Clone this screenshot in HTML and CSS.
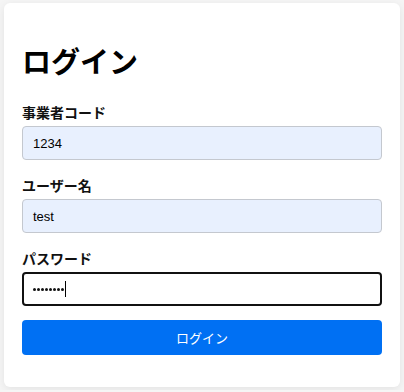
FILE: index.html
```html
<!DOCTYPE html>
<html lang="ja">
<head>
<meta charset="utf-8">
<link rel="stylesheet" href="styles.css">
</head>
<body>
<div class="card">
  <h1 class="title">ログイン</h1>
  <div class="field">
    <label class="label">事業者コード</label>
    <div class="input filled">1234</div>
  </div>
  <div class="field">
    <label class="label">ユーザー名</label>
    <div class="input filled">test</div>
  </div>
  <div class="field last">
    <label class="label">パスワード</label>
    <div class="input focused"><span class="dots"><i class="dot"></i><i class="dot"></i><i class="dot"></i><i class="dot"></i><i class="dot"></i><i class="dot"></i><i class="dot"></i><i class="dot"></i></span><span class="caret"></span></div>
  </div>
  <button class="btn">ログイン</button>
</div>
</body>
</html>
```
FILE: styles.css
```css
html, body {
  margin: 0;
  padding: 0;
}
body {
  background: #f5f5f5;
  font-family: "Liberation Sans", "Noto Sans CJK JP", sans-serif;
  padding: 3px 4px;
}
.card {
  background: #fff;
  border-radius: 6px;
  box-shadow: 0 2px 8px rgba(0,0,0,0.08);
  padding: 24px 18px 32px;
  box-sizing: border-box;
  width: 396px;
}
.title {
  font-size: 29px;
  font-weight: bold;
  margin: 16px 0 20px;
  line-height: 40px;
  color: #000;
}
.field {
  margin-bottom: 16px;
}
.field.last {
  margin-bottom: 14px;
}
.label {
  display: block;
  font-size: 14px;
  font-weight: bold;
  line-height: 20px;
  margin-bottom: 3px;
  color: #111;
}
.input {
  box-sizing: border-box;
  height: 34px;
  border: 1px solid #c4c8cf;
  border-radius: 4px;
  padding: 0 10px;
  font-size: 13px;
  display: flex;
  align-items: center;
  color: #000;
}
.filled {
  background: #e8f0fe;
}
.focused {
  border: 2px solid #111;
  padding: 0 9px;
  background: #fff;
}
.dots {
  display: flex;
  gap: 1px;
}
.dot {
  display: block;
  width: 3px;
  height: 3px;
  border-radius: 50%;
  background: #111;
}
.caret {
  display: inline-block;
  width: 1px;
  height: 16px;
  background: #000;
  margin-left: 1px;
}
.btn {
  display: block;
  width: 100%;
  height: 35px;
  border: none;
  border-radius: 4px;
  background: #0070f3;
  color: #fff;
  font-family: "Liberation Sans", "Noto Sans CJK JP", sans-serif;
  font-size: 13px;
  margin: 0;
}
```
